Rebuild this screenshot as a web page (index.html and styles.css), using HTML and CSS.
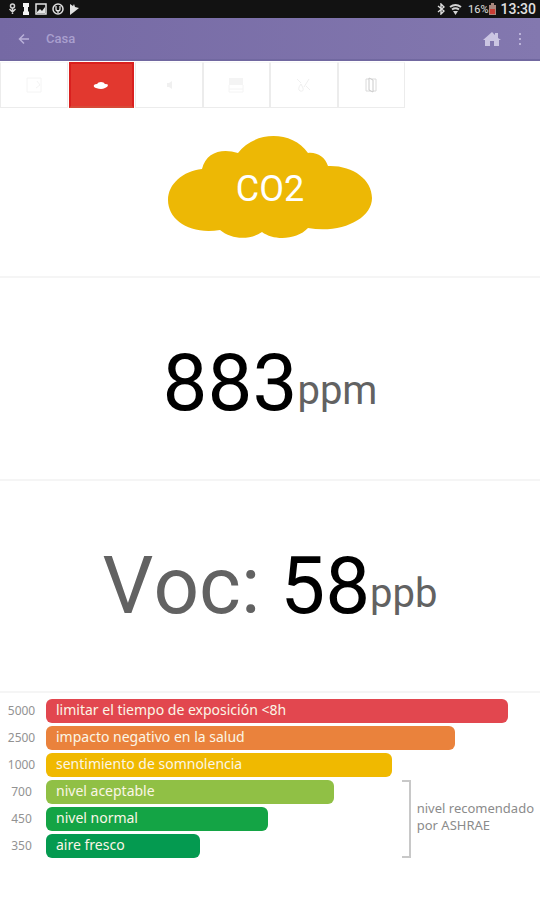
FILE: index.html
```html
<!DOCTYPE html>
<html lang="es">
<head>
<meta charset="utf-8">
<meta name="viewport" content="width=device-width, initial-scale=1">
<title>Casa</title>
<link rel="stylesheet" href="styles.css">
</head>
<body>
<div class="status">
  <div class="status-group">
    <svg width="9" height="12" viewBox="0 0 9 12"><path d="M4.500 5v6M1.500 6l3 3 3-3" fill="none" stroke="#d4d4d4" stroke-width="1.500"/><circle cx="4.500" cy="3" r="2" fill="none" stroke="#d4d4d4" stroke-width="1.500"/></svg>
    <svg width="8" height="12" viewBox="0 0 8 12"><path d="M1 0h6v4H6v4l1 1v3H1V9l1-1V4H1z" fill="#f4f4f4"/></svg>
    <svg width="12" height="12" viewBox="0 0 12 12"><path d="M1 1h10v10H1z" fill="none" stroke="#e4e4e4" stroke-width="1.500"/><path d="M2 9l3-3 2 2 3-4v6H2z" fill="#e4e4e4"/></svg>
    <svg width="12" height="12" viewBox="0 0 12 12"><circle cx="6" cy="6" r="5" fill="none" stroke="#e0e0e0" stroke-width="1.500"/><path d="M4 3v3a2 2 0 0 0 4 0V3M6 7v3" fill="none" stroke="#e0e0e0" stroke-width="1.300"/></svg>
    <svg width="11" height="12" viewBox="0 0 11 12"><path d="M1 1l3 2 1-2 1 3 4 1-5 4-4 3z" fill="#e0e0e0"/></svg>
  </div>
  <div class="status-group status-right">
    <svg width="8" height="12" viewBox="0 0 8 12"><path d="M1 3l6 5-3 3V1l3 3-6 5" fill="none" stroke="#dedede" stroke-width="1.400"/></svg>
    <svg width="13" height="12" viewBox="0 0 13 12"><path d="M1 4q5.500-4 11 0M3 6.500q3.500-2.500 7 0" fill="none" stroke="#d4d4d4" stroke-width="2"/><path d="M4 8h5l-2.500 4z" fill="#d4d4d4"/></svg>
    <span class="battery">16%</span>
    <svg width="7" height="12" viewBox="0 0 7 12"><path d="M2 0h3v2h2v10H0V2h2z" fill="#a9877e"/><path d="M1 6h5v5H1z" fill="#c93d35"/></svg>
    <span class="clock">13:30</span>
  </div>
</div>
<header class="appbar">
  <button class="icon-btn" aria-label="Atrás"><svg width="12" height="12" viewBox="0 0 12 12"><path d="M11 6H1.500M6 1.500L1.500 6 6 10.500" fill="none" stroke="#b9b0d8" stroke-width="1.500"/></svg></button>
  <h1>Casa</h1>
  <button class="icon-btn home" aria-label="Inicio"><svg width="18" height="16" viewBox="0 0 18 16"><path d="M9 1l3 3V2h3v5l3 2h-2v6h-5v-5H7v5H2V9H0z" fill="#cbc5e2"/></svg></button>
  <button class="icon-btn" aria-label="Más opciones"><svg width="4" height="14" viewBox="0 0 4 14"><path d="M1 1h2v2H1zM1 6h2v2H1zM1 11h2v2H1z" fill="#bbb3d9"/></svg></button>
</header>
<nav class="tabs">
  <button class="tab" aria-label="Plano"><svg width="16" height="16" viewBox="0 0 16 16"><path d="M1 1h14v14H1zM11 4l3 4-4 3" fill="none" stroke="#f4f4f4"/></svg></button>
  <button class="tab active" aria-label="Aire"><svg width="16" height="10" viewBox="0 0 16 10"><path d="M3 8Q0 7 1 5q1-1 3-1 1-2 4-2t4 2q3 0 3 1 0 2-3 3-2 1-4 1T3 8z" fill="#fff"/></svg></button>
  <button class="tab" aria-label="Sonido"><svg width="16" height="16" viewBox="0 0 16 16"><path d="M6 6h2l3-2v8l-3-2H6z" fill="#f0f0f0"/></svg></button>
  <button class="tab" aria-label="Persianas"><svg width="16" height="16" viewBox="0 0 16 16"><path d="M1 1h14v7H1z" fill="#f4f4f4"/><path d="M1 8v7h14V8M1 12h14" fill="none" stroke="#f4f4f4"/></svg></button>
  <button class="tab" aria-label="Clima"><svg width="16" height="16" viewBox="0 0 16 16"><path d="M1 2l4 4M5 7q-4 5-1 7 4 1 3-3zM8 10l5-8M10 9l4 4" fill="none" stroke="#f0f0f0"/></svg></button>
  <button class="tab" aria-label="Puerta"><svg width="12" height="16" viewBox="0 0 12 16"><path d="M1 2h10v12H1z" fill="none" stroke="#dadada"/><path d="M4 1l4 2v12l-4-2z" fill="#fff" stroke="#cacaca"/></svg></button>
</nav>
<main>
  <section class="panel cloud-panel">
    <div class="cloud">
      <svg viewBox="0 0 204 102" aria-hidden="true"><path d="M34 33C38 16 54 12 70 17C86-5 124-6 140 17C149 16 157 21 160 30C184 29 204 43 204 62C204 83 173 98 140 92C129 104 106 105 94 96C82 104 64 104 52 94C22 99 0 84 0 64C0 48 15 35 34 33Z" fill="#edb805"/></svg>
      <span class="cloud-label">CO2</span>
    </div>
  </section>
  <section class="panel co2-panel">
    <p class="reading">883<span class="unit">ppm</span></p>
  </section>
  <section class="panel voc-panel">
    <p class="reading"><span class="name">Voc: </span>58<span class="unit">ppb</span></p>
  </section>
  <section class="scale">
    <div class="row"><span class="level">5000</span><div class="track"><div class="bar red" style="width:93.600%">limitar el tiempo de exposición &lt;8h</div></div></div>
    <div class="row"><span class="level">2500</span><div class="track"><div class="bar orange" style="width:82.800%">impacto negativo en la salud</div></div></div>
    <div class="row"><span class="level">1000</span><div class="track"><div class="bar yellow" style="width:70%">sentimiento de somnolencia</div></div></div>
    <div class="recommended">
      <div class="row"><span class="level">700</span><div class="track"><div class="bar lime" style="width:58.200%">nivel aceptable</div></div></div>
      <div class="row"><span class="level">450</span><div class="track"><div class="bar green" style="width:45%">nivel normal</div></div></div>
      <div class="row"><span class="level">350</span><div class="track"><div class="bar deep" style="width:31.200%">aire fresco</div></div></div>
      <div class="note"><span class="bracket"></span><p>nivel recomendado<br>por ASHRAE</p></div>
    </div>
  </section>
</main>
</body>
</html>
```
FILE: styles.css
```css
* { box-sizing: border-box; }
body { margin: 0; background: #fff; color: #000; font-family: Roboto, "Liberation Sans", sans-serif; }
h1, p { margin: 0; font-weight: 400; }
button { margin: 0; padding: 0; border: 0; background: none; }
svg { display: block; }

.status { display: flex; justify-content: space-between; align-items: center; height: 18px; padding: 0 4px 0 8px; background: #121212; color: #e0e0e0; }
.status-group { display: flex; align-items: center; gap: 5px; }
.status-right { gap: 4px; }
.battery { margin-left: 2px; font-size: 11px; }
.battery + svg { margin-left: -3px; }
.clock { font-size: 14px; line-height: 18px; font-weight: 500; }

.appbar { display: flex; align-items: center; height: 43px; padding: 0 8px 0 12px; background: linear-gradient(90deg, #7569a4, #8378af); border-bottom: 2px solid #7168a0; }
.icon-btn { display: flex; justify-content: center; align-items: center; width: 24px; height: 32px; }
.appbar h1 { flex: 1; padding-left: 10px; font-size: 13px; color: #a99fce; font-weight: 500; }
.home { margin-right: 4px; }

.tabs { display: grid; grid-template-columns: repeat(8, 1fr); height: 47px; padding-top: 1px; }
.tab { display: flex; justify-content: center; align-items: center; border: 1px solid #ececec; border-top-color: #f8f8f8; }
.tab.active { margin: 0 1px; background: #e2382f; border: 2px solid #d9201f; border-bottom-color: #d64a38; }

.panel { display: flex; justify-content: center; border-bottom: 2px solid #f5f5f5; }
.cloud-panel { height: 170px; padding-top: 28px; }
.cloud { position: relative; width: 204px; height: 102px; }
.cloud-label { position: absolute; inset: 0; display: flex; justify-content: center; align-items: center; padding-top: 4px; color: #fff; font-size: 36px; }
.co2-panel { height: 203px; padding-top: 58px; }
.voc-panel { height: 212px; padding-top: 58px; }
.reading { font-size: 80px; line-height: 94px; white-space: pre; font-kerning: none; }
.unit { font-size: 40px; line-height: 40px; vertical-align: 6px; color: #626262; }
.name { color: #626262; }

.scale { display: flex; flex-direction: column; gap: 3px; padding: 6px 0 40px; font-family: "Noto Sans", "Open Sans", sans-serif; }
.row { display: grid; grid-template-columns: 46px 1fr; align-items: center; }
.level { padding-right: 3px; text-align: center; font-size: 12px; line-height: 22px; color: #929292; }
.bar { height: 24px; padding-left: 10px; border-radius: 6px; color: #fbf6e6; font-size: 14px; line-height: 22px; white-space: nowrap; }
.red { background: #e2474f; }
.orange { background: #ea823c; }
.yellow { background: #f0b900; }
.lime { background: #90c045; }
.green { background: #14a445; }
.deep { background: #049a50; }
.recommended { position: relative; display: flex; flex-direction: column; gap: 3px; }
.note { position: absolute; top: 0; right: 6px; bottom: 0; display: flex; align-items: center; gap: 6px; color: #8b8b8b; font-size: 13px; line-height: 17px; }
.note p { padding-bottom: 4px; }
.bracket { align-self: stretch; width: 9px; border: 2px solid #c8c8c8; border-left: 0; }
```
